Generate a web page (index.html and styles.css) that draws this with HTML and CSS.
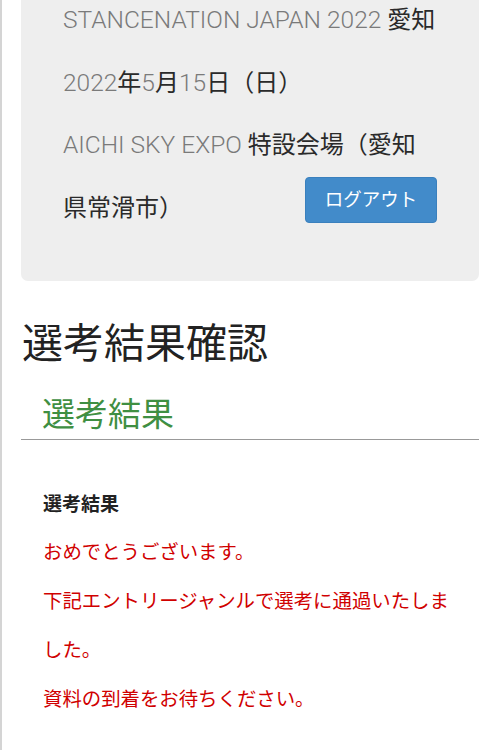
FILE: index.html
```html
<!DOCTYPE html>
<html lang="ja">
<head>
<meta charset="utf-8">
<title>選考結果確認</title>
<link rel="stylesheet" href="styles.css">
</head>
<body>
<div class="page">
  <section class="event-card">
    <p class="event-line"><span class="en">STANCENATION JAPAN 2022</span> 愛知</p>
    <p class="event-line"><span class="en">2022</span>年<span class="en">5</span>月<span class="en">15</span>日（日）</p>
    <div class="event-foot">
      <p class="event-line address"><span class="en">AICHI SKY EXPO</span> 特設会場（愛知<br>県常滑市）</p>
      <button class="logout" type="button">ログアウト</button>
    </div>
  </section>

  <h1 class="page-title">選考結果確認</h1>
  <h2 class="section-title">選考結果</h2>

  <div class="result">
    <p class="result-label">選考結果</p>
    <p class="result-msg">おめでとうございます。</p>
    <p class="result-msg">下記エントリージャンルで選考に通過いたしました。</p>
    <p class="result-msg">資料の到着をお待ちください。</p>
  </div>
</div>
</body>
</html>
```

FILE: styles.css
```css
html, body {
  margin: 0;
  padding: 0;
  background: #ffffff;
}

body {
  font-family: Roboto, "Noto Sans CJK JP", "Noto Sans", sans-serif;
  color: #333333;
  overflow: hidden;
}

.page {
  border-left: 2px solid #d4d4d4;
  padding: 0 21px 40px 19px;
  min-height: 750px;
  box-sizing: border-box;
}

.event-card {
  background: #eeeeee;
  border-radius: 0 0 7px 7px;
  margin-top: -42px;
  padding: 31px 42px 42px 42px;
}

.event-line {
  margin: 0;
  font-size: 24px;
  line-height: 62.5px;
  color: #2a2a2a;
  font-family: Roboto, "Noto Sans CJK JP", sans-serif;
}

.en {
  font-family: "Roboto Light", Roboto, sans-serif;
  font-weight: 300;
  font-size: 24.5px;
  color: #7a7a7a;
}

.event-foot {
  display: grid;
  grid-template-areas: "stack";
}

.event-foot > * {
  grid-area: stack;
}

.logout {
  justify-self: end;
  align-self: end;
  margin-bottom: 16px;
  width: 132px;
  height: 46px;
  border: 1px solid #3a80bd;
  border-radius: 4px;
  background: #428bca;
  color: #ffffff;
  font-family: "Noto Sans CJK JP", sans-serif;
  font-size: 18.5px;
  padding: 0 0 4px 0;
}

.page-title {
  margin: 35px 0 0 1px;
  font-family: "Noto Sans CJK JP", sans-serif;
  font-weight: 400;
  font-size: 41px;
  line-height: 49px;
  color: #222222;
}

.section-title {
  margin: 28px 0 0 0;
  padding: 0 0 8px 21px;
  border-bottom: 1px solid #999999;
  font-family: "Noto Sans CJK JP", sans-serif;
  font-weight: 400;
  font-size: 33px;
  line-height: 38px;
  color: #3f8f42;
}

.result {
  padding: 39px 21px 0 22px;
}

.result p {
  margin: 0;
  font-family: "Noto Sans CJK JP", sans-serif;
  font-size: 19.4px;
  line-height: 49px;
}

.result .result-label {
  font-weight: 700;
  font-size: 19px;
  line-height: 47px;
  color: #222222;
}

.result .result-msg {
  color: #d00000;
}
```
